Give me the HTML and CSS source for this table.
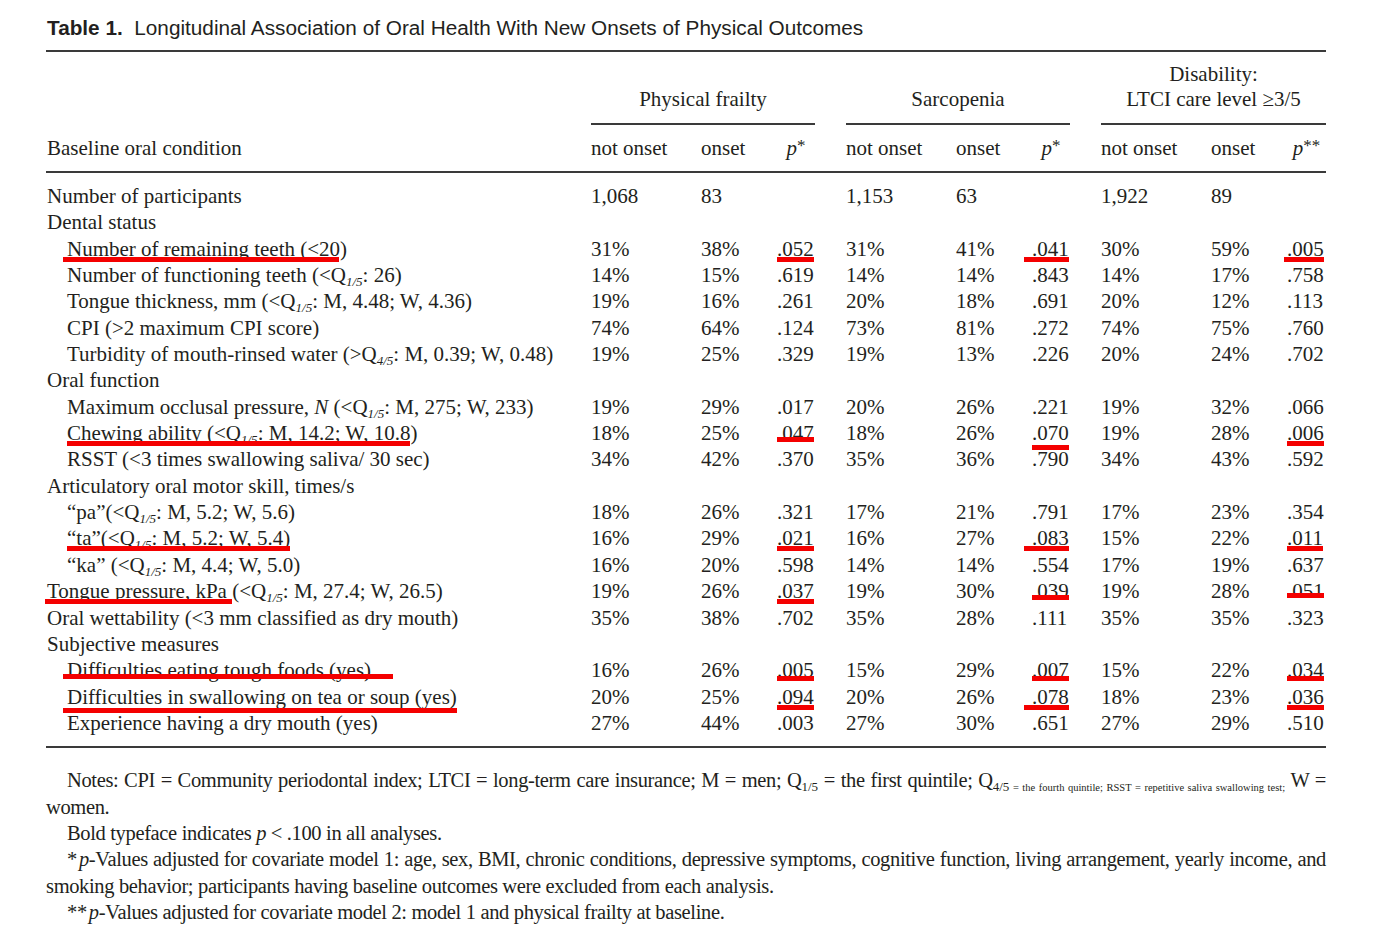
FILE: index.html
```html
<!DOCTYPE html>
<html lang="en">
<head>
<meta charset="utf-8">
<title>Table 1</title>
<link rel="stylesheet" href="styles.css">
</head>
<body>
<div class="page">
  <h1 class="title"><b>Table 1.</b>&nbsp; Longitudinal Association of Oral Health With New Onsets of Physical Outcomes</h1>
  <table class="tbl">
    <colgroup>
      <col class="c-label"><col class="c-no"><col class="c-on"><col class="c-p"><col class="c-gap">
      <col class="c-no"><col class="c-on"><col class="c-p"><col class="c-gap">
      <col class="c-no"><col class="c-on"><col class="c-p3">
    </colgroup>
    <thead>
      <tr class="h1">
        <th></th>
        <th colspan="3" class="grp">Physical frailty</th>
        <th></th>
        <th colspan="3" class="grp">Sarcopenia</th>
        <th></th>
        <th colspan="3" class="grp">Disability:<br>LTCI care level ≥3/5</th>
      </tr>
      <tr class="h2">
        <th class="lab">Baseline oral condition</th>
        <th>not onset</th><th>onset</th><th class="pc"><i>p</i><sup>*</sup></th><th></th>
        <th>not onset</th><th>onset</th><th class="pc"><i>p</i><sup>*</sup></th><th></th>
        <th>not onset</th><th>onset</th><th class="pc"><i>p</i><sup>**</sup></th>
      </tr>
    </thead>
    <tbody>
      <tr class="first"><td>Number of participants</td><td>1,068</td><td>83</td><td></td><td></td><td>1,153</td><td>63</td><td></td><td></td><td>1,922</td><td>89</td><td></td></tr>
      <tr><td>Dental status</td><td></td><td></td><td></td><td></td><td></td><td></td><td></td><td></td><td></td><td></td><td></td></tr>
      <tr><td class="ind"><span class="mk mk-l1">Number of remaining teeth (&lt;20)</span></td><td>31%</td><td>38%</td><td><span class="mk">.052</span></td><td></td><td>31%</td><td>41%</td><td><span class="mk mk-w1">.041</span></td><td></td><td>30%</td><td>59%</td><td><span class="mk mk-w2">.005</span></td></tr>
      <tr><td class="ind">Number of functioning teeth (&lt;Q<sub>1/5</sub>: 26)</td><td>14%</td><td>15%</td><td>.619</td><td></td><td>14%</td><td>14%</td><td>.843</td><td></td><td>14%</td><td>17%</td><td>.758</td></tr>
      <tr><td class="ind">Tongue thickness, mm (&lt;Q<sub>1/5</sub>: M, 4.48; W, 4.36)</td><td>19%</td><td>16%</td><td>.261</td><td></td><td>20%</td><td>18%</td><td>.691</td><td></td><td>20%</td><td>12%</td><td>.113</td></tr>
      <tr><td class="ind">CPI (&gt;2 maximum CPI score)</td><td>74%</td><td>64%</td><td>.124</td><td></td><td>73%</td><td>81%</td><td>.272</td><td></td><td>74%</td><td>75%</td><td>.760</td></tr>
      <tr><td class="ind">Turbidity of mouth-rinsed water (&gt;Q<sub>4/5</sub>: M, 0.39; W, 0.48)</td><td>19%</td><td>25%</td><td>.329</td><td></td><td>19%</td><td>13%</td><td>.226</td><td></td><td>20%</td><td>24%</td><td>.702</td></tr>
      <tr><td>Oral function</td><td></td><td></td><td></td><td></td><td></td><td></td><td></td><td></td><td></td><td></td><td></td></tr>
      <tr><td class="ind">Maximum occlusal pressure, <i>N</i> (&lt;Q<sub>1/5</sub>: M, 275; W, 233)</td><td>19%</td><td>29%</td><td>.017</td><td></td><td>20%</td><td>26%</td><td>.221</td><td></td><td>19%</td><td>32%</td><td>.066</td></tr>
      <tr><td class="ind"><span class="mk">Chewing ability (&lt;Q<sub>1/5</sub>: M, 14.2; W, 10.8</span>)</td><td>18%</td><td>25%</td><td><span class="mk mk-hi">.047</span></td><td></td><td>18%</td><td>26%</td><td><span class="mk mk-lo">.070</span></td><td></td><td>19%</td><td>28%</td><td><span class="mk">.006</span></td></tr>
      <tr><td class="ind">RSST (&lt;3 times swallowing saliva/ 30 sec)</td><td>34%</td><td>42%</td><td>.370</td><td></td><td>35%</td><td>36%</td><td>.790</td><td></td><td>34%</td><td>43%</td><td>.592</td></tr>
      <tr><td>Articulatory oral motor skill, times/s</td><td></td><td></td><td></td><td></td><td></td><td></td><td></td><td></td><td></td><td></td><td></td></tr>
      <tr><td class="ind">“pa”(&lt;Q<sub>1/5</sub>: M, 5.2; W, 5.6)</td><td>18%</td><td>26%</td><td>.321</td><td></td><td>17%</td><td>21%</td><td>.791</td><td></td><td>17%</td><td>23%</td><td>.354</td></tr>
      <tr><td class="ind"><span class="mk">“ta”(&lt;Q<sub>1/5</sub>: M, 5.2; W, 5.4)</span></td><td>16%</td><td>29%</td><td><span class="mk">.021</span></td><td></td><td>16%</td><td>27%</td><td><span class="mk mk-w1">.083</span></td><td></td><td>15%</td><td>22%</td><td><span class="mk">.011</span></td></tr>
      <tr><td class="ind">“ka” (&lt;Q<sub>1/5</sub>: M, 4.4; W, 5.0)</td><td>16%</td><td>20%</td><td>.598</td><td></td><td>14%</td><td>14%</td><td>.554</td><td></td><td>17%</td><td>19%</td><td>.637</td></tr>
      <tr><td><span class="mk mk-l2">Tongue pressure, kPa </span>(&lt;Q<sub>1/5</sub>: M, 27.4; W, 26.5)</td><td>19%</td><td>26%</td><td><span class="mk">.037</span></td><td></td><td>19%</td><td>30%</td><td><span class="mk mk-hi">.039</span></td><td></td><td>19%</td><td>28%</td><td><span class="mk mk-hi2">.051</span></td></tr>
      <tr><td>Oral wettability (&lt;3 mm classified as dry mouth)</td><td>35%</td><td>38%</td><td>.702</td><td></td><td>35%</td><td>28%</td><td>.111</td><td></td><td>35%</td><td>35%</td><td>.323</td></tr>
      <tr><td>Subjective measures</td><td></td><td></td><td></td><td></td><td></td><td></td><td></td><td></td><td></td><td></td><td></td></tr>
      <tr><td class="ind"><span class="mk mk-l3">Difficulties eating tough foods (yes)</span></td><td>16%</td><td>26%</td><td><span class="mk mk-hi3">.005</span></td><td></td><td>15%</td><td>29%</td><td><span class="mk mk-hi3">.007</span></td><td></td><td>15%</td><td>22%</td><td><span class="mk mk-hi3">.034</span></td></tr>
      <tr><td class="ind"><span class="mk mk-l4">Difficulties in swallowing on tea or soup (yes)</span></td><td>20%</td><td>25%</td><td><span class="mk">.094</span></td><td></td><td>20%</td><td>26%</td><td><span class="mk mk-w1">.078</span></td><td></td><td>18%</td><td>23%</td><td><span class="mk">.036</span></td></tr>
      <tr class="last"><td class="ind">Experience having a dry mouth (yes)</td><td>27%</td><td>44%</td><td>.003</td><td></td><td>27%</td><td>30%</td><td>.651</td><td></td><td>27%</td><td>29%</td><td>.510</td></tr>
    </tbody>
  </table>
  <div class="notes">
    <p>Notes: CPI = Community periodontal index; LTCI = long-term care insurance; M = men; Q<sub>1/5</sub> = the first quintile; Q<sub class="tiny"><span class="big">4/5</span> = the fourth quintile; RSST = repetitive saliva swallowing test;</sub> W = women.</p>
    <p>Bold typeface indicates <i>p</i> &lt; .100 in all analyses.</p>
    <p><span class="ast">*</span><i class="pv">p</i>-Values adjusted for covariate model 1: age, sex, BMI, chronic conditions, depressive symptoms, cognitive function, living arrangement, yearly income, and smoking behavior; participants having baseline outcomes were excluded from each analysis.</p>
    <p><span class="ast">**</span><i class="pv">p</i>-Values adjusted for covariate model 2: model 1 and physical frailty at baseline.</p>
  </div>
</div>
</body>
</html>
```

FILE: styles.css
```css
* { box-sizing: border-box; }
html, body { margin: 0; padding: 0; background: #fff; }
body {
  font-family: "Liberation Serif", "Times New Roman", serif;
  color: #231f20;
}
.page {
  width: 1280px;
  margin-left: 46px;
  padding-top: 16px;
}
.title {
  font-family: "Liberation Sans", Arial, sans-serif;
  font-weight: normal;
  font-size: 20.75px;
  line-height: 24px;
  margin: 0;
  padding: 0 0 10px 1px;
  border-bottom: 2px solid #3a3a3a;
}
.title b { font-weight: bold; }

.tbl {
  width: 1280px;
  table-layout: fixed;
  border-collapse: collapse;
  font-size: 21px;
}
.c-label { width: 545px; }
.c-no { width: 110px; }
.c-on { width: 76px; }
.c-p { width: 38px; }
.c-gap { width: 31px; }
.c-p3 { width: 39px; }

.tbl th, .tbl td {
  padding: 0;
  text-align: left;
  font-weight: normal;
  white-space: nowrap;
}
.h1 th {
  height: 72px;
  vertical-align: bottom;
  line-height: 25px;
  padding-bottom: 11px;
}
.h1 th.grp {
  text-align: center;
  border-bottom: 2px solid #3a3a3a;
}
.h2 th {
  height: 48px;
  vertical-align: middle;
  line-height: 24px;
  border-bottom: 2px solid #3a3a3a;
}
.h2 th.lab { padding-left: 1px; }
.h2 th.pc { text-align: center; }
.h2 sup { font-size: 17px; vertical-align: 4px; line-height: 0; }

.tbl td {
  height: 26.35px;
  line-height: 26.35px;
  vertical-align: middle;
}
.tbl td:first-child { padding-left: 1px; }
.tbl td.ind { padding-left: 21px; }
.tbl tr.first td { padding-top: 10px; height: 36.35px; }
.tbl tr.last td { padding-bottom: 10px; height: 36.35px; border-bottom: 2px solid #3a3a3a; }
.tbl sub { font-size: 13px; vertical-align: -4px; line-height: 0; font-style: italic; }

.mk { position: relative; }
.mk::after {
  content: "";
  position: absolute;
  left: 0;
  right: 0;
  bottom: -1px;
  height: 5px;
  background: #f40000;
}
.mk-hi::after { bottom: 3px; }
.mk-hi2::after { bottom: 5px; }
.mk-hi3::after { bottom: 1px; }
.mk-lo::after { bottom: -5px; }
.mk-w1::after { left: -8px; }
.mk-w2::after { left: -3px; }
.mk-l1::after { left: -4px; right: 8px; }
.mk-l2::after { left: -2px; }
.mk-l3::after { left: -4px; right: -22px; bottom: 3px; }
.mk-l4::after { left: -4px; bottom: -4px; }

.notes {
  margin-top: 19px;
  font-size: 20.5px;
  letter-spacing: -0.35px;
  line-height: 26.4px;
  text-align: justify;
}
.notes p { margin: 0; text-indent: 21px; }
.notes sub { font-size: 13px; vertical-align: -4px; line-height: 0; letter-spacing: 0; }
.notes sub.tiny { font-size: 10.5px; }
.notes sub.tiny .big { font-size: 13px; }
.notes .ast { margin-right: 2px; }
```
